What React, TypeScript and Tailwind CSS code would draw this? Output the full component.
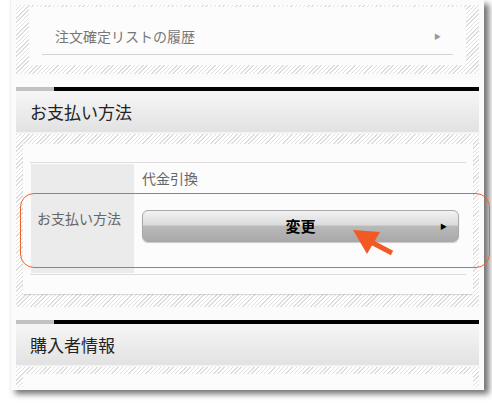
import React from "react";

const hatch =
  "bg-[repeating-linear-gradient(135deg,#dedede_0px,#dedede_1px,#ffffff_1px,#ffffff_3px)]";

function SectionHeader({ title }: { title: string }) {
  return (
    <div>
      <div className="flex h-[4px]">
        <div className="w-[38px] bg-[#c2c2c2]" />
        <div className="flex-1 bg-black" />
      </div>
      <div className="flex h-[43px] items-center border-b-[2px] border-[#f4f4f4] bg-[linear-gradient(#f6f6f6,#e2e2e2)] pl-[14px] text-[17px] text-[#222]">
        {title}
      </div>
    </div>
  );
}

export default function App() {
  return (
    <div
      className="relative h-[409px] w-[492px] overflow-hidden bg-white"
      style={{ fontFamily: '"Noto Sans CJK JP", "Noto Sans", sans-serif' }}
    >
      <div className="ml-[10px] h-[390px] w-[474px] overflow-hidden border-l border-[#f0f0f0] bg-[#fbfbfb] pl-[5px] pr-[5px] shadow-[5px_4px_6px_rgba(0,0,0,0.55)]">
        {/* 注文確定リストの履歴 */}
        <div className={`mt-[5px] px-[13px] pb-[9px] pt-[2px] ${hatch}`}>
          <div className="bg-[#fcfcfc] pb-[10px] pt-[12px]">
            <div className="mx-[13px] flex h-[36px] items-center justify-between border-b border-[#d4d4d4] pl-[13px] pr-[12px]">
              <span className="text-[14px] text-[#777]">注文確定リストの履歴</span>
              <span className="text-[7px] text-[#999]">▶</span>
            </div>
          </div>
        </div>

        <div className="mt-[13px]">
          <SectionHeader title="お支払い方法" />
          <div className={`px-[6px] pb-[13px] pl-[7px] pt-[10px] ${hatch}`}>
            <div className="h-[150px] bg-[#fcfcfc] px-[7px] pt-[18px] shadow-[0_1px_1px_rgba(0,0,0,0.12)]">
              <div className="flex border-b border-t border-[#dcdcdc] p-[1px]">
                <div className="flex h-[109px] w-[103px] items-center bg-[#ebebeb] pl-[6px] text-[14px] text-[#666]">
                  お支払い方法
                </div>
                <div className="flex flex-1 flex-col pl-[8px] pr-[6px] pt-[5px]">
                  <div className="text-[14px] leading-[18px] text-[#666]">代金引換</div>
                  <div className="relative mt-[23px] flex h-[32px] items-center justify-center rounded-[6px] border border-[#a9a9a9] bg-[linear-gradient(#f2f2f2_0%,#dcdcdc_45%,#b9b9b9_52%,#a9a9a9_100%)] shadow-[0_1px_1px_rgba(0,0,0,0.2)]">
                    <span className="text-[15px] font-bold text-black">変更</span>
                    <span className="absolute right-[11px] text-[7px] text-black">▶</span>
                  </div>
                </div>
              </div>
            </div>
          </div>
        </div>

        <div className="mt-[13px]">
          <SectionHeader title="購入者情報" />
          <div className={`h-[20px] pl-[7px] pr-[6px] pt-[7px] ${hatch}`}>
            <div className="h-full bg-[#fcfcfc]" />
          </div>
        </div>
      </div>

      {/* highlight outline */}
      <div className="absolute left-[20px] top-[193px] h-[75px] w-[470px] rounded-[14px] border border-[#f0642a]" />

      {/* orange arrow */}
      <svg className="absolute left-[350px] top-[226px]" width="46" height="32" viewBox="0 0 46 32">
        <polygon points="3,4 30,6 17,28" fill="#f15a24" />
        <line x1="21" y1="16" x2="42" y2="27" stroke="#f15a24" strokeWidth="5" />
      </svg>
    </div>
  );
}
